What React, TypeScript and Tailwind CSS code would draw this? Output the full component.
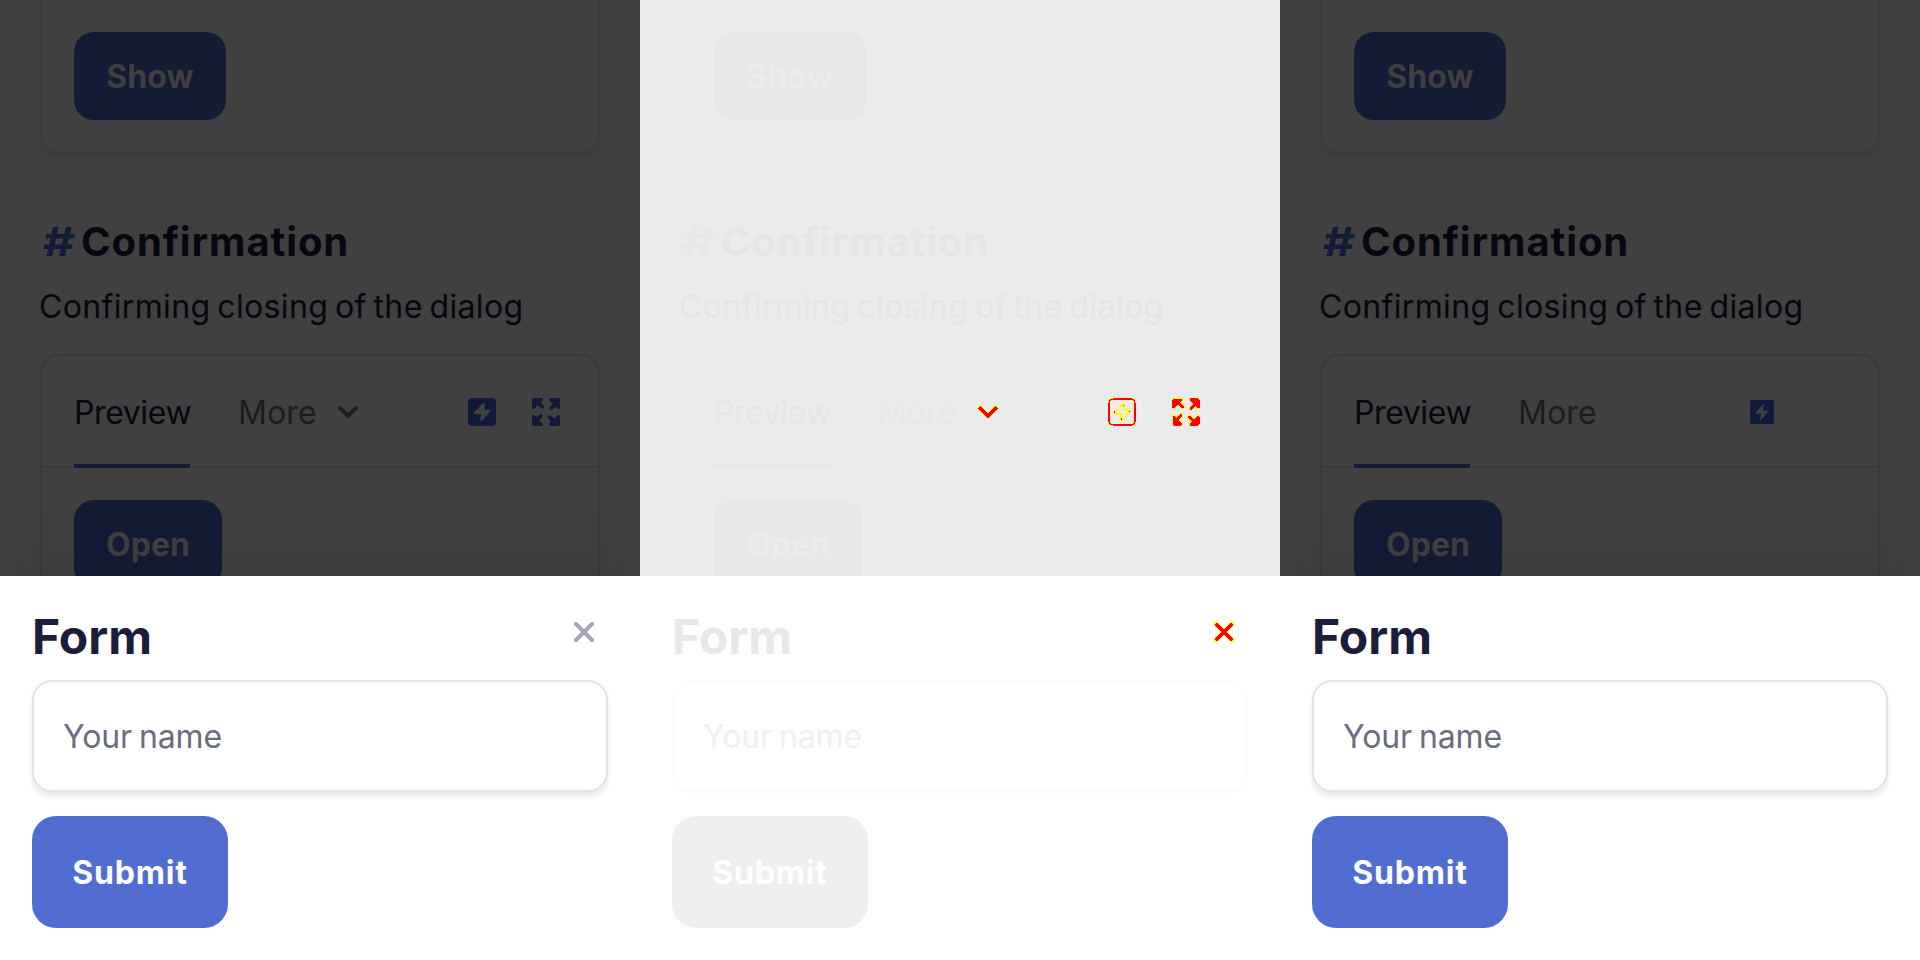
import React from "react";

type Kind = "before" | "diff" | "after";

const theme = {
  before: {
    page: "bg-[#404040]", line: "border-[#3a3a3a]", btn: "bg-[#141b34]", btnText: "text-[#404040]",
    hash: "text-[#141b34]", dark: "text-[#06070f]", muted: "text-[#1c1c21]",
    cardShadow: "shadow-[0_4px_6px_rgba(0,0,0,0.07)]",
    title: "text-[#1b1d3a]", field: "border-[#e5e5e5] shadow-[0_4px_6px_rgba(0,0,0,0.1)]", hint: "text-[#6b6c80]",
    submit: "bg-[#516dd2]", modal: "shadow-[0_-8px_60px_rgba(0,0,0,0.1)]",
  },
  diff: {
    page: "bg-[#ebebeb]", line: "border-[#ebebeb]", btn: "bg-[#e7e7e7]", btnText: "text-[#ebebeb]",
    hash: "text-[#e7e7e7]", dark: "text-[#e5e5e5]", muted: "text-[#e8e8e8]",
    cardShadow: "",
    title: "text-[#e8e8e8]", field: "border-[#fcfcfc] shadow-[0_4px_6px_rgba(0,0,0,0.01)]", hint: "text-[#f0f0f0]",
    submit: "bg-[#efefef]", modal: "",
  },
};

function Bolt({ kind }: { kind: Kind }) {
  const bolt = "M14.600 5.600c.800-1 2.400-.600 2.200.700L16 11.800h5c1.300 0 1.600 1.200 1 1.900l-7.500 8.600c-.900 1-2.500.500-2.300-.800l.900-5.300H7.200c-1.200 0-1.600-1.100-.900-1.900z";
  if (kind === "after")
    return (
      <svg viewBox="0 0 28 28" className="size-7 text-[#121838]">
        <path fillRule="evenodd" fill="currentColor" d="M4 2h20a2 2 0 0 1 2 2v20a2 2 0 0 1-2 2H4a2 2 0 0 1-2-2V4a2 2 0 0 1 2-2zM16 5.500L6.800 15.500h6.400l-1.200 7 9.200-10h-6.400z" />
      </svg>
    );
  if (kind === "diff")
    return (
      <svg viewBox="0 0 28 28" className="size-7" fill="none" shapeRendering="crispEdges">
        <rect x="1" y="1" width="26" height="26" rx="3.500" stroke="#ff0000" strokeWidth="2" />
        <path d="M.5 4.500V2.500L2.500.5h2M23.500.5h2l2 2v2M27.500 23.500v2l-2 2h-2M4.500 27.500h-2l-2-2v-2M2.500 4.500l2-2M23.500 2.500l2 2M25.500 23.500l-2 2M4.500 25.500l-2-2" stroke="#ffff00" />
        <path d={bolt} stroke="#ffff00" strokeWidth="1.700" />
        <path d="M15 7.500h1M6.500 13v2M13 20v2M21.500 12.500v1" stroke="#ff0000" strokeWidth="1" />
      </svg>
    );
  return (
    <svg viewBox="0 0 28 28" className="size-7 text-[#121838]">
      <rect width="28" height="28" rx="4" fill="currentColor" />
      <path d={bolt} fill="#404040" />
    </svg>
  );
}

function Expand({ kind }: { kind: Kind }) {
  if (kind === "after") return <div className="size-7" />;
  const arrow = "M2 0h7.500a1.500 1.500 0 0 1 1 2.600L8.800 4.300l3 3.500c1.400 1.600-.800 4-2.600 2.400L5.600 7.200l-3 3.300A1.500 1.500 0 0 1 0 9.500V2a2 2 0 0 1 2-2z";
  const diff = kind === "diff";
  return (
    <svg viewBox="0 0 28 28" className="size-7" shapeRendering={diff ? "crispEdges" : "auto"}
      fill={diff ? "#ff0000" : "#121838"} stroke={diff ? "#ffff00" : "none"} strokeWidth="1">
      {[0, 90, 180, 270].map((a) => <path key={a} d={arrow} transform={`rotate(${a} 14 14)`} />)}
    </svg>
  );
}

function Chevron({ kind }: { kind: Kind }) {
  if (kind === "after") return null;
  const diff = kind === "diff";
  return (
    <svg viewBox="0 0 20 14" className="h-3.5 w-5" fill="none" strokeLinecap={diff ? "square" : "round"} strokeLinejoin="round" shapeRendering={diff ? "crispEdges" : "auto"}>
      <path d="M2.200 3.200l7.800 7.600 7.800-7.600" stroke={diff ? "#ffff00" : "#1c1c21"} strokeWidth={diff ? 5 : 4} />
      {diff && <path d="M2.500 3.500l7.500 7.300 7.500-7.300" stroke="#ff0000" strokeWidth="3.600" />}
    </svg>
  );
}

function Cross({ kind }: { kind: Kind }) {
  if (kind === "after") return null;
  const diff = kind === "diff";
  return (
    <svg viewBox="0 0 20 20" className="size-5" fill="none" strokeLinecap={diff ? "square" : "round"} shapeRendering={diff ? "crispEdges" : "auto"}>
      <path d="M2 2l16 16M18 2L2 18" stroke={diff ? "#ffff00" : "#a5a5b3"} strokeWidth={diff ? 5 : 3.900} />
      {diff && <path d="M3 3l14 14M17 3L3 17" stroke="#ff0000" strokeWidth="3.200" />}
    </svg>
  );
}

function Panel({ kind }: { kind: Kind }) {
  const t = theme[kind === "diff" ? "diff" : "before"];
  return (
    <section className={`flex h-[960px] w-[640px] flex-col overflow-hidden ${t.page}`}>
      <div className="h-[576px] shrink-0 overflow-hidden px-10">
        <div className={`flex h-[154px] items-start rounded-b-[20px] border-2 border-t-0 px-8 pt-8 ${t.line} ${t.cardShadow}`}>
          <button className={`h-[88px] w-[152px] rounded-[20px] pt-0.5 text-[32px] leading-[86px] font-bold tracking-[0.1px] ${t.btn} ${t.btnText}`}>Show</button>
        </div>
        <h2 className={`mt-[60px] flex h-14 items-center text-[40px] leading-[56px] font-bold ${t.dark}`}>
          <span className="w-[41px] pl-0.5">
            <span className={`inline-block origin-left scale-x-125 italic ${t.hash}`}>#</span>
          </span>
          <span className="tracking-[0.9px]">Confirmation</span>
        </h2>
        <p className={`mt-[13px] -ml-px h-[47px] text-[32px] leading-[48px] tracking-[0.35px] whitespace-nowrap [word-spacing:-2.5px] ${t.dark}`}>Confirming closing of the dialog</p>
        <div className={`mt-6 h-[300px] rounded-[20px] border-2 ${t.line} ${t.cardShadow}`}>
          <div className={`flex h-[112px] items-start border-b-2 px-8 text-[32px] leading-[114px] ${t.line}`}>
            <span className={`h-[112px] w-[116px] shrink-0 border-b-4 tracking-[-0.4px] ${kind === "diff" ? "border-[#e7e7e7]" : "border-[#141b34]"} ${t.dark}`}>Preview</span>
            <span className={`ml-12 w-20 tracking-[0.1px] ${t.muted}`}>More</span>
            <div className="ml-5 flex h-[112px] w-5 items-center"><Chevron kind={kind} /></div>
            <div className="ml-auto flex h-[112px] items-center gap-9 pr-1.5"><Bolt kind={kind} /><Expand kind={kind} /></div>
          </div>
          <div className="px-8 pt-8">
            <button className={`h-[88px] w-[148px] rounded-[20px] pt-0.5 text-[32px] leading-[86px] font-bold ${t.btn} ${t.btnText}`}>Open</button>
          </div>
        </div>
      </div>
      <div className={`h-[384px] bg-white px-8 pt-8 ${t.modal}`}>
        <div className="flex h-[72px] items-start justify-between">
          <h1 className={`text-[48px] leading-[58px] font-bold ${t.title}`}>Form</h1>
          <div className="pt-3.5 pr-3.5"><Cross kind={kind} /></div>
        </div>
        <div className={`h-28 rounded-[20px] border-2 bg-white px-[29px] text-[32px] leading-[110px] tracking-[-0.1px] [word-spacing:-2px] ${t.field} ${t.hint}`}>Your name</div>
        <button className={`mt-6 h-28 w-[196px] rounded-[24px] pt-0.5 text-[32px] leading-[110px] font-bold tracking-[0.8px] text-white ${t.submit}`}>Submit</button>
      </div>
    </section>
  );
}

export default function App() {
  return (
    <main className="flex h-[960px] w-[1920px] overflow-hidden font-['Inter',sans-serif]">
      <Panel kind="before" />
      <Panel kind="diff" />
      <Panel kind="after" />
    </main>
  );
}
